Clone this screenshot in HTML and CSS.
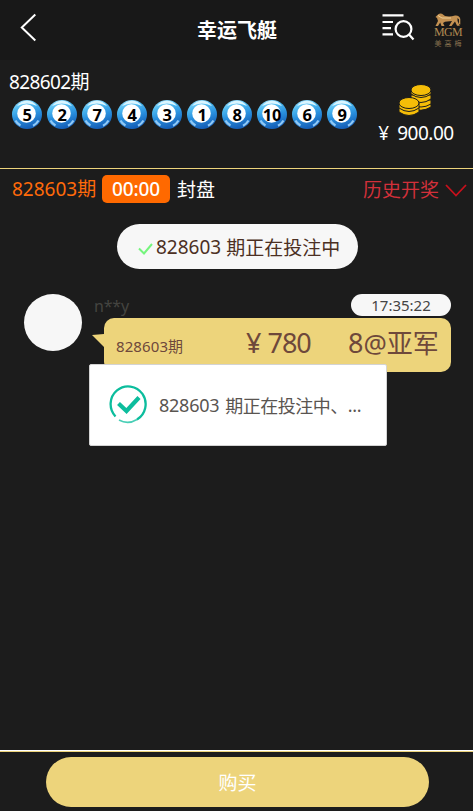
FILE: index.html
```
<!DOCTYPE html>
<html lang="zh-CN">
<head>
<meta charset="utf-8">
<title>幸运飞艇</title>
<link rel="stylesheet" href="styles.css">
</head>
<body>
<svg class="defs" width="0" height="0">
  <defs>
    <linearGradient id="ballFill" x1="0.1" y1="0" x2="0.4" y2="1">
      <stop offset="0" stop-color="#a5e4ff"/><stop offset=".3" stop-color="#4fbaf0"/>
      <stop offset=".6" stop-color="#2a91df"/><stop offset="1" stop-color="#1560b8"/>
    </linearGradient>
    <symbol id="ball" viewBox="0 0 30 29">
      <ellipse cx="15" cy="14.5" rx="15" ry="14.5" fill="url(#ballFill)"/>
      <path d="M5 6Q9 .8 15 .7Q21 .8 25 6Q20 3.500 15 3.500Q10 3.500 5 6Z" fill="#d9f5ff"/>
      <path d="M3.500 20.500Q5 23.500 8.500 25.500M21 25.800Q24.500 24 26.500 20.500" fill="none" stroke="#8fc8f5" stroke-width="2.200"/>
      <circle cx="14.500" cy="13.500" r="9.300" fill="#fff"/>
    </symbol>
  </defs>
</svg>
<div class="app">
  <header class="top">
    <svg class="back" width="18" height="30" viewBox="0 0 18 30"><path d="M15.300 1.500 1.800 14.500 15.300 27.500" fill="none" stroke="#fff" stroke-width="2"/></svg>
    <h1>幸运飞艇</h1>
    <svg class="search" width="34" height="30" viewBox="0 0 34 30"><g fill="none" stroke="#fff" stroke-width="2.200"><path d="M.5 3.300H21.500M.5 10H11M.5 16.200H9M.5 22.300H11"/><circle cx="21.500" cy="17" r="7.900"/><path d="m27 22.500 4.500 5"/></g></svg>
    <div class="brand">
      <svg width="26" height="14" viewBox="0 0 26 14"><path d="M2.500 2Q4-.3 7 .8L10 3Q15 4 20 2.500Q24.500 2 25.300 6V11.500L24 11V6.500L22.500 5 22.500 8 24.800 12.700H22L20 8.500 16.500 13H14L17 8 10 8.800 8 10 9.500 13H6.500L5.200 9.500 3 13H0.500L3 8 2 5 0.500 4Z" fill="#c39152"/><path d="M3 2.500 7 5 16 5" fill="none" stroke="#f0cf96"/></svg>
      <span class="mgm">MGM</span><span class="cn">美高梅</span>
    </div>
  </header>
  <section class="result">
    <div class="draw">
      <div class="issue"><span class="num">828602</span>期</div>
      <div class="balls">
        <span class="ball"><svg><use href="#ball"/></svg><b>5</b></span>
        <span class="ball"><svg><use href="#ball"/></svg><b>2</b></span>
        <span class="ball"><svg><use href="#ball"/></svg><b>7</b></span>
        <span class="ball"><svg><use href="#ball"/></svg><b>4</b></span>
        <span class="ball"><svg><use href="#ball"/></svg><b>3</b></span>
        <span class="ball"><svg><use href="#ball"/></svg><b>1</b></span>
        <span class="ball"><svg><use href="#ball"/></svg><b>8</b></span>
        <span class="ball"><svg><use href="#ball"/></svg><b>10</b></span>
        <span class="ball"><svg><use href="#ball"/></svg><b>6</b></span>
        <span class="ball"><svg><use href="#ball"/></svg><b>9</b></span>
      </div>
    </div>
    <div class="wallet">
      <svg width="32" height="32" viewBox="0 0 32 32"><g fill="#f5bd08" stroke="#1c1c1c" stroke-width="1"><path d="M12 20V24Q22 29 32 23V20Z"/><path d="M12 16V20Q22 26 32 20V16Z"/><path d="M12 11V15Q22 22 32 15V11Z"/><path d="M12 6V10Q22 17 32 10V6Z"/><ellipse cx="22" cy="6" rx="10" ry="5.500"/><path d="M0 23V28Q10 35 20 28V23Z"/><path d="M0 19V24Q10 31 20 24V19Z"/><ellipse cx="10" cy="19" rx="10" ry="5.500"/></g></svg>
      <div class="money"><span class="yen">¥</span><span class="num">900.00</span></div>
    </div>
  </section>
  <section class="current">
    <div class="now"><span class="num">828603</span>期</div>
    <span class="timer">00:00</span>
    <span class="state">封盘</span>
    <div class="history">历史开奖</div>
    <svg class="chev" width="22" height="14" viewBox="0 0 22 14"><path d="m1 1 10 10.500L21 1" fill="none" stroke="#c8101c" stroke-width="1.800"/></svg>
  </section>
  <main class="chat">
    <div class="notice">
      <svg width="15" height="12" viewBox="0 0 15 12"><path d="m1 5.500 5 5L14 1" fill="none" stroke="#75f57d" stroke-width="2"/></svg>
      <span class="num">828603</span><span class="rest">期正在投注中</span>
    </div>
    <article class="message">
      <div class="avatar"></div>
      <div class="content">
        <div class="meta"><span class="name">n**y</span><time>17:35:22</time></div>
        <div class="bubble">
          <svg class="tail" width="12" height="14" viewBox="0 0 12 14"><path d="M0 1 12 0V13Z" fill="#edd47b"/></svg>
          <div class="bid"><span class="num">828603</span>期</div>
          <div class="amount"><span class="yen">¥</span><span class="num">780</span></div>
          <div class="pick"><span class="eight">8</span><span class="at">@</span>亚军</div>
        </div>
      </div>
    </article>
  </main>
  <footer><button>购买</button></footer>
  <div class="toast">
    <svg width="38" height="40" viewBox="0 0 38 40"><g fill="none" stroke="#0cbd9d"><path d="M6.500 31.500A17.500 17.800 0 1 1 28 34.500" stroke-width="2.300"/><path d="M28 34.500Q19 40 10 35" stroke-width="1.500" opacity=".75"/><path d="m9.500 18.500 8 7.500L30 12.500" stroke-width="4.200"/></g></svg>
    <span class="num">828603</span><span class="rest">期正在投注中、</span><span class="dots">...</span>
  </div>
</div>
</body>
</html>
```
FILE: styles.css
```
* { box-sizing: border-box; }
body { margin: 0; background: #1c1c1c; font-family: "Noto Sans", "Noto Sans CJK SC", sans-serif; font-size: 19px; color: #fff; }
svg { display: block; flex: none; }
.defs { position: absolute; }
.app { height: 811px; display: flex; flex-direction: column; overflow: hidden; white-space: nowrap; }
.num { letter-spacing: -0.64px; }
.top { height: 60px; flex: none; background: #181818; display: grid; grid-template-columns: 197px 185px 51px 30px; }
.back { margin: 13px 0 0 20px; }
h1 { margin: 17px 0 0; font-size: 20px; line-height: 26px; font-weight: 700; font-family: "Noto Sans CJK SC", sans-serif; }
.search { margin-top: 12px; }
.brand { margin-top: 13px; display: flex; flex-direction: column; align-items: center; color: #b18a52; }
.mgm { font: 12px/9px "Liberation Serif", serif; margin-top: 1px; letter-spacing: -0.7px; }
.cn { font: 7px/10px "Noto Sans CJK SC", sans-serif; margin-top: 1px; letter-spacing: 3px; margin-right: -3px; color: #86704e; }
.result { height: 109px; flex: none; display: flex; border-bottom: 1px solid #edd47b; }
.draw { width: 376px; padding: 10px 0 0 9px; }
.issue { line-height: 25px; }
.balls { display: flex; gap: 5px; margin: 5px 0 0 3px; }
.ball { width: 30px; height: 29px; display: grid; }
.ball svg, .ball b { grid-area: 1 / 1; }
.ball svg { width: 30px; height: 29px; }
.ball b { color: #000; font-size: 16.5px; line-height: 30px; text-align: center; letter-spacing: -0.3px; z-index: 1; }
.wallet { width: 80px; display: flex; flex-direction: column; align-items: center; padding-top: 24px; }
.wallet svg { margin-left: -2px; }
.money { display: flex; gap: 8px; line-height: 26px; margin-top: 4px; }
.money .num { letter-spacing: -0.5px; }
.current { height: 40px; flex: none; display: flex; align-items: center; padding-left: 12px; }
.now { color: #ff6a0a; width: 90px; line-height: 40px; }
.now .num { letter-spacing: 0; }
.timer { width: 68px; height: 28px; border-radius: 5px; background: #ff6900; line-height: 28px; text-align: center; font-weight: 500; letter-spacing: -.1px; }
.state { margin-left: 7px; }
.history { margin-left: auto; color: #d2303a; }
.chev { margin: 4px 6px 0 6px; }
.chat { flex: 1; padding-top: 15px; }
.notice { width: 241px; height: 45px; margin-left: 117px; border-radius: 23px; background: #f7f7f7; color: #4c3023; display: flex; align-items: center; padding-left: 21px; }
.notice svg { margin: 5px 3px 0 0; }
.notice .num { letter-spacing: 0; }
.notice .rest { margin-left: 5px; }
.message { display: flex; margin: 25px 22px 0 24px; }
.avatar { width: 58px; height: 57px; border-radius: 50%; background: #f7f7f7; }
.content { margin-left: 22px; flex: 1; }
.meta { height: 24px; display: flex; justify-content: space-between; margin-left: -10px; }
.name { color: #444440; font-size: 16px; line-height: 25px; letter-spacing: -.2px; }
time { width: 100px; height: 22px; border-radius: 11px; background: #f7f7f7; color: #454545; font-size: 15px; line-height: 23px; text-align: center; }
.bubble { position: relative; height: 54px; border-radius: 10px; background: #edd47b; color: #6e483b; display: grid; grid-template-columns: 130px 102px auto; line-height: 50px; padding-left: 12px; }
.tail { position: absolute; left: -12px; top: 16px; }
.bid { font-size: 15px; line-height: 57px; }
.bid .num { letter-spacing: 0.1px; }
.amount { font-size: 27px; }
.amount .num { letter-spacing: -1px; margin-left: 6px; }
.pick { font-size: 26px; }
.eight { font-size: 27px; }
.at { font-size: 26px; }
footer { height: 61px; flex: none; border-top: 1px solid #fff; box-shadow: inset 0 1px #edd47b; padding: 6px 44px 0 46px; }
button { width: 100%; height: 50px; border: 0; border-radius: 25px; background: #edd47b; color: #fff; font: 19px/50px "Noto Sans CJK SC", sans-serif; padding: 0; }
.toast { position: absolute; left: 89px; top: 364px; width: 298px; height: 82px; background: #fff; border: 1px solid #d3d3d3; border-radius: 2px; color: #5a5551; display: flex; align-items: center; padding-left: 18px; font-size: 18px; }
.toast svg { margin-left: 1px; }
.toast .num { margin-left: 12px; letter-spacing: -.25px; }
.toast .rest { margin-left: 6px; letter-spacing: -.5px; }
.dots { letter-spacing: -.3px; }
```
